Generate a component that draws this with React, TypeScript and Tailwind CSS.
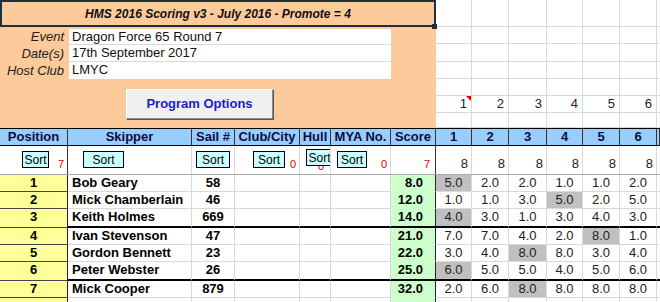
import React from 'react';

const COLS =
  'grid grid-cols-[68px_124px_43px_65px_31px_60px_45px_36px_37px_38px_36px_37px_37px_1fr]';

type Row = {
  pos: number;
  name: string;
  sail: string;
  score: string;
  races: string[];
  drop: number;
  thick?: boolean;
};

const rows: Row[] = [
  { pos: 1, name: 'Bob Geary', sail: '58', score: '8.0', races: ['5.0', '2.0', '2.0', '1.0', '1.0', '2.0'], drop: 0 },
  { pos: 2, name: 'Mick Chamberlain', sail: '46', score: '12.0', races: ['1.0', '1.0', '3.0', '5.0', '2.0', '5.0'], drop: 3 },
  { pos: 3, name: 'Keith Holmes', sail: '669', score: '14.0', races: ['4.0', '3.0', '1.0', '3.0', '4.0', '3.0'], drop: 0, thick: true },
  { pos: 4, name: 'Ivan Stevenson', sail: '47', score: '21.0', races: ['7.0', '7.0', '4.0', '2.0', '8.0', '1.0'], drop: 4 },
  { pos: 5, name: 'Gordon Bennett', sail: '23', score: '22.0', races: ['3.0', '4.0', '8.0', '8.0', '3.0', '4.0'], drop: 2 },
  { pos: 6, name: 'Peter Webster', sail: '26', score: '25.0', races: ['6.0', '5.0', '5.0', '4.0', '5.0', '6.0'], drop: 0, thick: true },
  { pos: 7, name: 'Mick Cooper', sail: '879', score: '32.0', races: ['2.0', '6.0', '8.0', '8.0', '8.0', '8.0'], drop: 2 },
];

const raceWidths = ['w-[36px]', 'w-[37px]', 'w-[38px]', 'w-[36px]', 'w-[37px]', 'w-[37px]'];

const SortBtn = ({ left, width, top = 'top-[5px]' }: { left: string; width: string; top?: string }) => (
  <div
    className={`absolute ${top} ${left} ${width} h-[17px] bg-[#ccffff] border border-black flex items-center justify-center text-[12px] text-black leading-none overflow-hidden`}
  >
    Sort
  </div>
);

export default function App() {
  return (
    <div className="w-[660px] h-[302px] overflow-hidden bg-white font-['Liberation_Sans',Arial,sans-serif] text-black">
      {/* top block */}
      <div className="flex h-[128px]">
        <div className="relative w-[436px] shrink-0 bg-[#fcca9b]">
          <div className="h-[27px] border-2 border-[#1d2f45] flex items-center justify-center text-[12px] font-bold italic text-[#111]">
            HMS 2016 Scoring v3 - July 2016 - Promote = 4
          </div>
          <div className="absolute left-[432px] top-[24px] w-[5px] h-[5px] bg-[#1d2f45]" />
          <div className="flex mt-[2px]">
            <div className="w-[69px] text-[13px] italic text-[#222] text-right pr-[5px]">
              <div className="h-[16px] leading-[16px]">Event</div>
              <div className="h-[17px] leading-[17px]">Date(s)</div>
              <div className="h-[17px] leading-[17px]">Host Club</div>
            </div>
            <div className="w-[322px] bg-white text-[13px] text-[#111]">
              <div className="h-[16px] leading-[15px] pl-[3px] border-b border-[#dadada]">Dragon Force 65 Round 7</div>
              <div className="h-[17px] leading-[16px] pl-[3px] border-b border-[#dadada]">17th September 2017</div>
              <div className="h-[17px] leading-[16px] pl-[3px]">LMYC</div>
            </div>
          </div>
          <div className="ml-[126px] mt-[10px] w-[147px] h-[30px] bg-[#f0f0f0] border border-[#fff] border-r-[#8a8a8a] border-b-[#8a8a8a] shadow-[1px_1px_0_#555] flex items-center justify-center text-[13px] font-bold text-[#1d1dc4]">
            Program Options
          </div>
        </div>
        <div className="flex-1 flex flex-col">
          {[27, 17, 18, 17, 17, 17, 15].map((h, i) => (
            <div
              key={i}
              className={`flex border-b border-[#d9d9d9] ${
                ['h-[27px]', 'h-[17px]', 'h-[18px]', 'h-[17px]', 'h-[17px]', 'h-[17px]', 'h-[15px]'][i]
              }`}
            >
              {raceWidths.map((w, j) => (
                <div
                  key={j}
                  className={`${w} relative shrink-0 border-r border-[#d9d9d9] text-[13px] text-[#222] text-right pr-[4px] leading-[16px]`}
                >
                  {i === 5 ? j + 1 : ''}
                  {i === 5 && j === 0 && (
                    <div className="absolute right-0 top-0 w-0 h-0 border-t-[5px] border-l-[5px] border-t-[#e00000] border-l-transparent" />
                  )}
                </div>
              ))}
              <div className="flex-1" />
            </div>
          ))}
        </div>
      </div>

      {/* header row */}
      <div className={`${COLS} h-[18px] border-y border-black bg-[#99ccff] text-[13px] font-bold text-[#0c0c45] leading-[16px]`}>
        {['Position', 'Skipper', 'Sail #', 'Club/City', 'Hull', 'MYA No.', 'Score', '1', '2', '3', '4', '5', '6', ''].map((t, i) => (
          <div key={i} className="border-r border-[#333] text-center whitespace-nowrap overflow-hidden">
            {t}
          </div>
        ))}
      </div>

      {/* sort row */}
      <div className={`${COLS} h-[29px] border-b border-[#a8a8a8] text-[11px]`}>
        <div className="relative border-r border-[#333] flex items-end justify-end pr-[3px] pb-[2px] text-[#e00000]">
          <SortBtn left="left-[22px]" width="w-[27px]" />7
        </div>
        <div className="relative border-r border-[#d9d9d9]">
          <SortBtn left="left-[15px]" width="w-[41px]" />
        </div>
        <div className="relative border-r border-[#d9d9d9]">
          <SortBtn left="left-[4px]" width="w-[34px]" />
        </div>
        <div className="relative border-r border-[#d9d9d9] flex items-end justify-end pr-[3px] pb-[2px] text-[#e00000]">
          <SortBtn left="left-[18px]" width="w-[32px]" />0
        </div>
        <div className="relative border-r border-[#d9d9d9] flex items-end justify-end pr-[6px] pb-[0px] text-[#e00000] overflow-hidden">
          0<SortBtn left="left-[6px]" width="w-[27px]" top="top-[3px]" />
        </div>
        <div className="relative border-r border-[#d9d9d9] flex items-end justify-end pr-[3px] pb-[2px] text-[#e00000]">
          <SortBtn left="left-[6px]" width="w-[30px]" />0
        </div>
        <div className="border-r border-[#333] flex items-end justify-end pr-[5px] pb-[2px] text-[#e00000]">7</div>
        {[0, 1, 2, 3, 4, 5].map((j) => (
          <div key={j} className="border-r border-[#d9d9d9] flex items-end justify-end pr-[3px] pb-[3px] text-[13px] leading-[14px] text-[#222]">
            8
          </div>
        ))}
        <div />
      </div>

      {/* data rows */}
      {rows.map((r) => {
        const b = r.thick ? 'border-b-2 border-b-black' : 'border-b border-b-[#d9d9d9]';
        return (
          <div key={r.pos} className={`${COLS} ${r.thick ? 'h-[19px]' : 'h-[17px]'} text-[13px] leading-[16px]`}>
            <div className="bg-[#ffff99] border-r border-r-[#222] border-b border-b-[#444] text-center font-bold">{r.pos}</div>
            <div className={`${b} border-r border-r-[#d9d9d9] pl-[4px] font-bold whitespace-nowrap`}>{r.name}</div>
            <div className={`${b} border-r border-r-[#d9d9d9] text-center font-bold`}>{r.sail}</div>
            <div className={`${b} border-r border-r-[#d9d9d9]`} />
            <div className={`${b} border-r border-r-[#d9d9d9]`} />
            <div className={`${b} border-r border-r-[#d9d9d9]`} />
            <div className={`${r.thick ? 'border-b-2 border-b-black' : 'border-b border-b-[#ccffcc]'} bg-[#ccffcc] border-r border-r-[#222] text-right pr-[12px] font-bold`}>
              {r.score}
            </div>
            {r.races.map((v, j) => (
              <div
                key={j}
                className={`${b} border-r border-r-[#d9d9d9] text-center text-[#222] ${j === r.drop ? 'bg-[#c0c0c0]' : ''}`}
              >
                {v}
              </div>
            ))}
            <div className={b} />
          </div>
        );
      })}
      <div className={`${COLS} h-[17px]`}>
        <div className="bg-[#ffff99] border-r border-r-[#222]" />
        <div className="border-r border-r-[#d9d9d9]" />
        <div className="border-r border-r-[#d9d9d9]" />
        <div className="border-r border-r-[#d9d9d9]" />
        <div className="border-r border-r-[#d9d9d9]" />
        <div className="border-r border-r-[#d9d9d9]" />
        <div className="bg-[#ccffcc] border-r border-r-[#222]" />
        {[0, 1, 2, 3, 4, 5].map((j) => (
          <div key={j} className="border-r border-r-[#d9d9d9]" />
        ))}
        <div />
      </div>
    </div>
  );
}
